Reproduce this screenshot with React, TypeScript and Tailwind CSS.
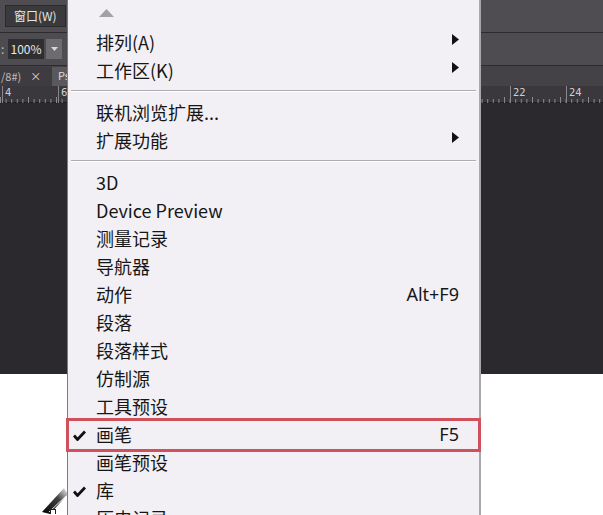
import React from "react";

const font = { fontFamily: '"Noto Sans CJK SC", "Noto Sans", sans-serif' };

type Item =
  | { sep: true }
  | { label: string; sub?: boolean; key?: string; check?: boolean; hl?: boolean };

const items: Item[] = [
  { label: "排列(A)", sub: true },
  { label: "工作区(K)", sub: true },
  { sep: true },
  { label: "联机浏览扩展..." },
  { label: "扩展功能", sub: true },
  { sep: true },
  { label: "3D" },
  { label: "Device Preview" },
  { label: "测量记录" },
  { label: "导航器" },
  { label: "动作", key: "Alt+F9" },
  { label: "段落" },
  { label: "段落样式" },
  { label: "仿制源" },
  { label: "工具预设" },
  { label: "画笔", key: "F5", check: true, hl: true },
  { label: "画笔预设" },
  { label: "库", check: true },
  { label: "历史记录" },
];

function Check() {
  return (
    <svg width="13" height="11" viewBox="0 0 13 11">
      <path d="M1 5.5 L4.5 9.5 L12 1.5" stroke="#111" strokeWidth="2.8" fill="none" />
    </svg>
  );
}

function Ruler({ labels }: { labels: { x: number; t: string }[] }) {
  return (
    <div className="relative h-[17px] bg-[#3a383c] border-b border-[#1e1d20]">
      <svg className="absolute inset-0" width="603" height="17">
        {Array.from({ length: 120 }).map((_, i) => (
          <line key={i} x1={i * 5.6 + 0.5} x2={i * 5.6 + 0.5} y1={i % 5 === 0 ? 11 : 13} y2={17} stroke="#8a888c" strokeWidth="1" />
        ))}
      </svg>
      {labels.map((l) => (
        <div key={l.t} className="absolute top-0 h-[17px] pl-[2px] border-l border-[#8a888c] text-[10px] leading-[14px] text-[#d0d0d0]" style={{ left: l.x, fontFamily: '"DejaVu Sans", sans-serif' }}>
          {l.t}
        </div>
      ))}
    </div>
  );
}

export default function App() {
  return (
    <div className="relative w-[603px] h-[515px] overflow-hidden bg-white" style={font}>
      {/* background photoshop UI */}
      <div className="flex flex-col w-full">
        <div className="h-[33px] bg-[#4f4d52] border-b border-[#2c2b2e] flex items-center pl-[5px]">
          <div className="h-[22px] px-[8px] flex items-center bg-[#3a3a3c] border border-[#2a2a2a] text-[12px] text-[#e6e6e6]">窗口(W)</div>
        </div>
        <div className="h-[33px] bg-[#4e4c51] border-b border-[#2c2b2e] flex items-center">
          <span className="text-[#bbb] text-[12px] w-[8px] pl-[1px]">:</span>
          <div className="h-[20px] w-[36px] bg-[#2f2f31] text-[12px] text-[#e8e8e8] flex items-center justify-center">100%</div>
          <div className="h-[20px] w-[16px] ml-[2px] bg-[#6d6b70] flex items-center justify-center">
            <svg width="7" height="4"><path d="M0 0 L7 0 L3.5 4Z" fill="#d8d8d8" /></svg>
          </div>
        </div>
        <div className="h-[20px] bg-[#444246] flex items-end">
          <div className="h-[19px] w-[52px] bg-[#3e3c40] text-[11px] text-[#bfbfbf] flex items-center">
            <span className="pl-[1px]">/8#)</span>
            <span className="ml-[9px] text-[#ddd] text-[11px]">×</span>
          </div>
          <div className="h-[19px] w-[30px] bg-[#5a585c] text-[11px] text-[#ddd] pl-[6px]">Ps</div>
        </div>
        <Ruler labels={[{ x: 2, t: "4" }, { x: 58, t: "6" }, { x: 510, t: "22" }, { x: 566, t: "24" }]} />
        <div className="h-[271px] bg-[#2b292d]" />
        <div className="h-[140px] bg-white relative">
          <svg className="absolute left-[36px] top-[100px]" width="32" height="40">
            <defs>
              <linearGradient id="g" x1="0" y1="1" x2="1" y2="0">
                <stop offset="0" stopColor="#000" />
                <stop offset="0.6" stopColor="#111" stopOpacity="0.8" />
                <stop offset="1" stopColor="#000" stopOpacity="0" />
              </linearGradient>
            </defs>
            <path d="M6 38 L28 14 L32 20 L14 40Z" fill="url(#g)" />
            <path d="M13 38 L30 22" stroke="#eee" strokeWidth="1" />
            <rect x="14.5" y="35.5" width="5" height="5" fill="#fff" stroke="#222" />
          </svg>
        </div>
      </div>

      {/* menu overlay */}
      <div className="absolute left-[67px] top-0 w-[414px] h-[530px] bg-[#f2f0f4] border-l border-[#7d7b80] border-r-2 border-r-[#a9a7ab] text-[18px] text-[#161616]">
        <div className="h-[28px] flex items-start pl-[31px] pt-[9px]">
          <svg width="15" height="8"><path d="M0 8 L7.5 0 L15 8Z" fill="#a3a1a6" /></svg>
        </div>
        {items.map((it, i) =>
          "sep" in it ? (
            <div key={i} className="h-[14px] flex items-center px-[3px]">
              <div className="w-full h-[2px] border-t border-[#aeacb1] border-b border-b-white" />
            </div>
          ) : (
            <div key={i} className="relative h-[28px] flex items-center pl-[28px] pr-[20px]">
              {it.hl && <div className="absolute left-[-2px] right-[-2px] top-[-2px] bottom-[-4px] border-[3px] border-[#d0515b]" />}
              {it.check && (
                <div className="absolute left-[5px] top-[10px]">
                  <Check />
                </div>
              )}
              <span className="flex-1 leading-none">{it.label}</span>
              {it.key && <span className="leading-none" style={{ fontFamily: '"Noto Sans", sans-serif' }}>{it.key}</span>}
              {it.sub && (
                <svg className="mb-[6px]" width="7" height="11">
                  <path d="M0 0 L7 5.5 L0 11Z" fill="#111" />
                </svg>
              )}
            </div>
          )
        )}
      </div>
    </div>
  );
}
